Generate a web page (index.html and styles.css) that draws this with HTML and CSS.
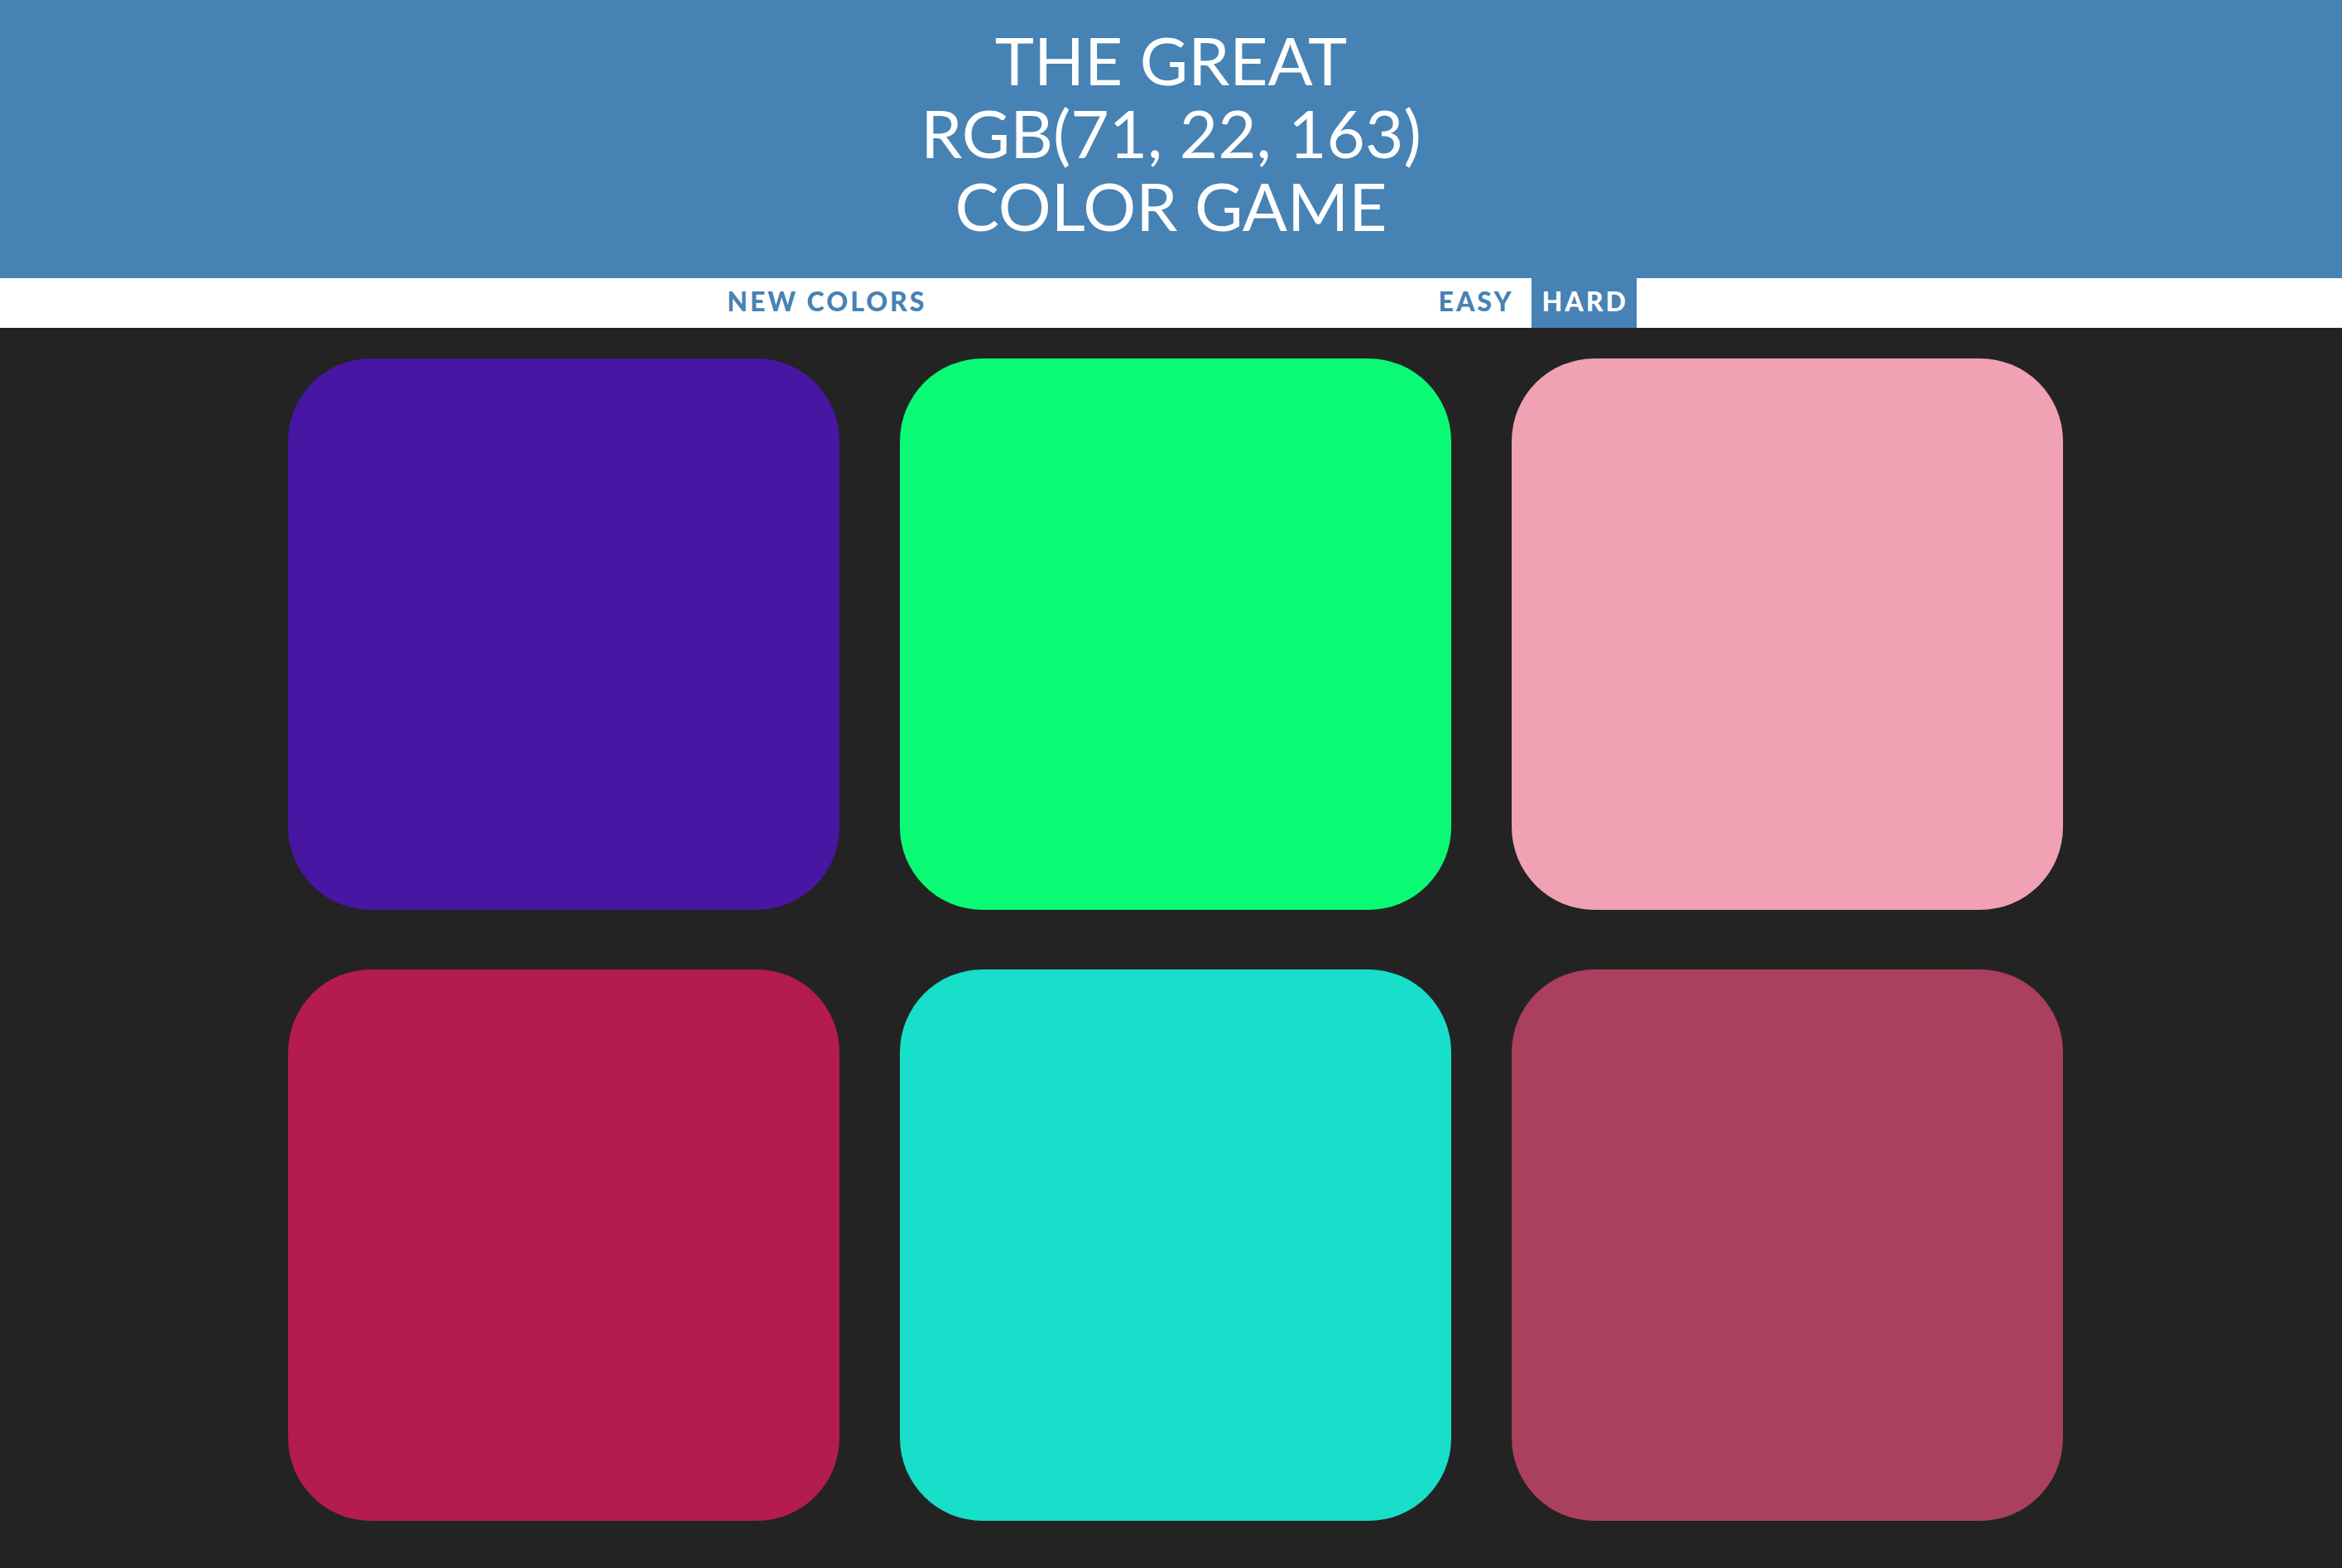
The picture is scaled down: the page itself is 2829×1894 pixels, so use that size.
FILE: index.html
```html
<!DOCTYPE html>
<html>
<head>
<meta charset="utf-8">
<title>Color Game</title>
<link rel="stylesheet" href="styles.css">
</head>
<body>
<h1 class="title">The Great<br><span class="color-display">RGB(71, 22, 163)</span><br>Color Game</h1>
<div class="stripe">
  <button class="btn btn-reset">New Colors</button>
  <span class="message"></span>
  <button class="btn btn-mode">Easy</button>
  <button class="btn btn-mode selected">Hard</button>
</div>
<div class="board">
  <div class="square sq1"></div>
  <div class="square sq2"></div>
  <div class="square sq3"></div>
  <div class="square sq4"></div>
  <div class="square sq5"></div>
  <div class="square sq6"></div>
</div>
</body>
</html>
```

FILE: styles.css
```css
html, body {
  margin: 0;
  padding: 0;
}
body {
  background: #232323;
  font-family: "Lato", "Noto Sans", sans-serif;
  min-height: 1894px;
}
.title {
  margin: 0;
  padding: 28px 0 44px;
  background: #4682b4;
  color: #ffffff;
  text-align: center;
  text-transform: uppercase;
  font-weight: 400;
  font-size: 80px;
  line-height: 88px;
  height: 264px;
}
.stripe {
  background: #ffffff;
  height: 60px;
  display: flex;
  justify-content: center;
  align-items: stretch;
  padding-left: 12px;
}
.btn {
  border: none;
  background: #ffffff;
  color: #4682b4;
  text-transform: uppercase;
  font-family: "Lato", "Noto Sans", sans-serif;
  font-weight: 900;
  font-size: 32px;
  letter-spacing: 3px;
  padding: 0 14px 5px;
  margin: 0;
  height: 60px;
  outline: none;
}
.message {
  display: inline-block;
  width: 566px;
  margin: 0 12px;
}
.btn-mode.selected {
  background: #4682b4;
  color: #ffffff;
  margin-left: 8px;
  padding: 0 10px 5px 12px;
}
.board {
  width: 2144px;
  margin: 37px 0 0 348px;
  display: grid;
  grid-template-columns: repeat(3, 666px);
  grid-auto-rows: 666px;
  column-gap: 73px;
  row-gap: 72px;
}
.square {
  border-radius: 100px;
}
.sq1 { background: rgb(71, 22, 163); }
.sq2 { background: rgb(10, 250, 117); }
.sq3 { background: rgb(240, 161, 179); }
.sq4 { background: rgb(180, 27, 79); }
.sq5 { background: rgb(23, 223, 201); }
.sq6 { background: rgb(170, 64, 93); }
```
